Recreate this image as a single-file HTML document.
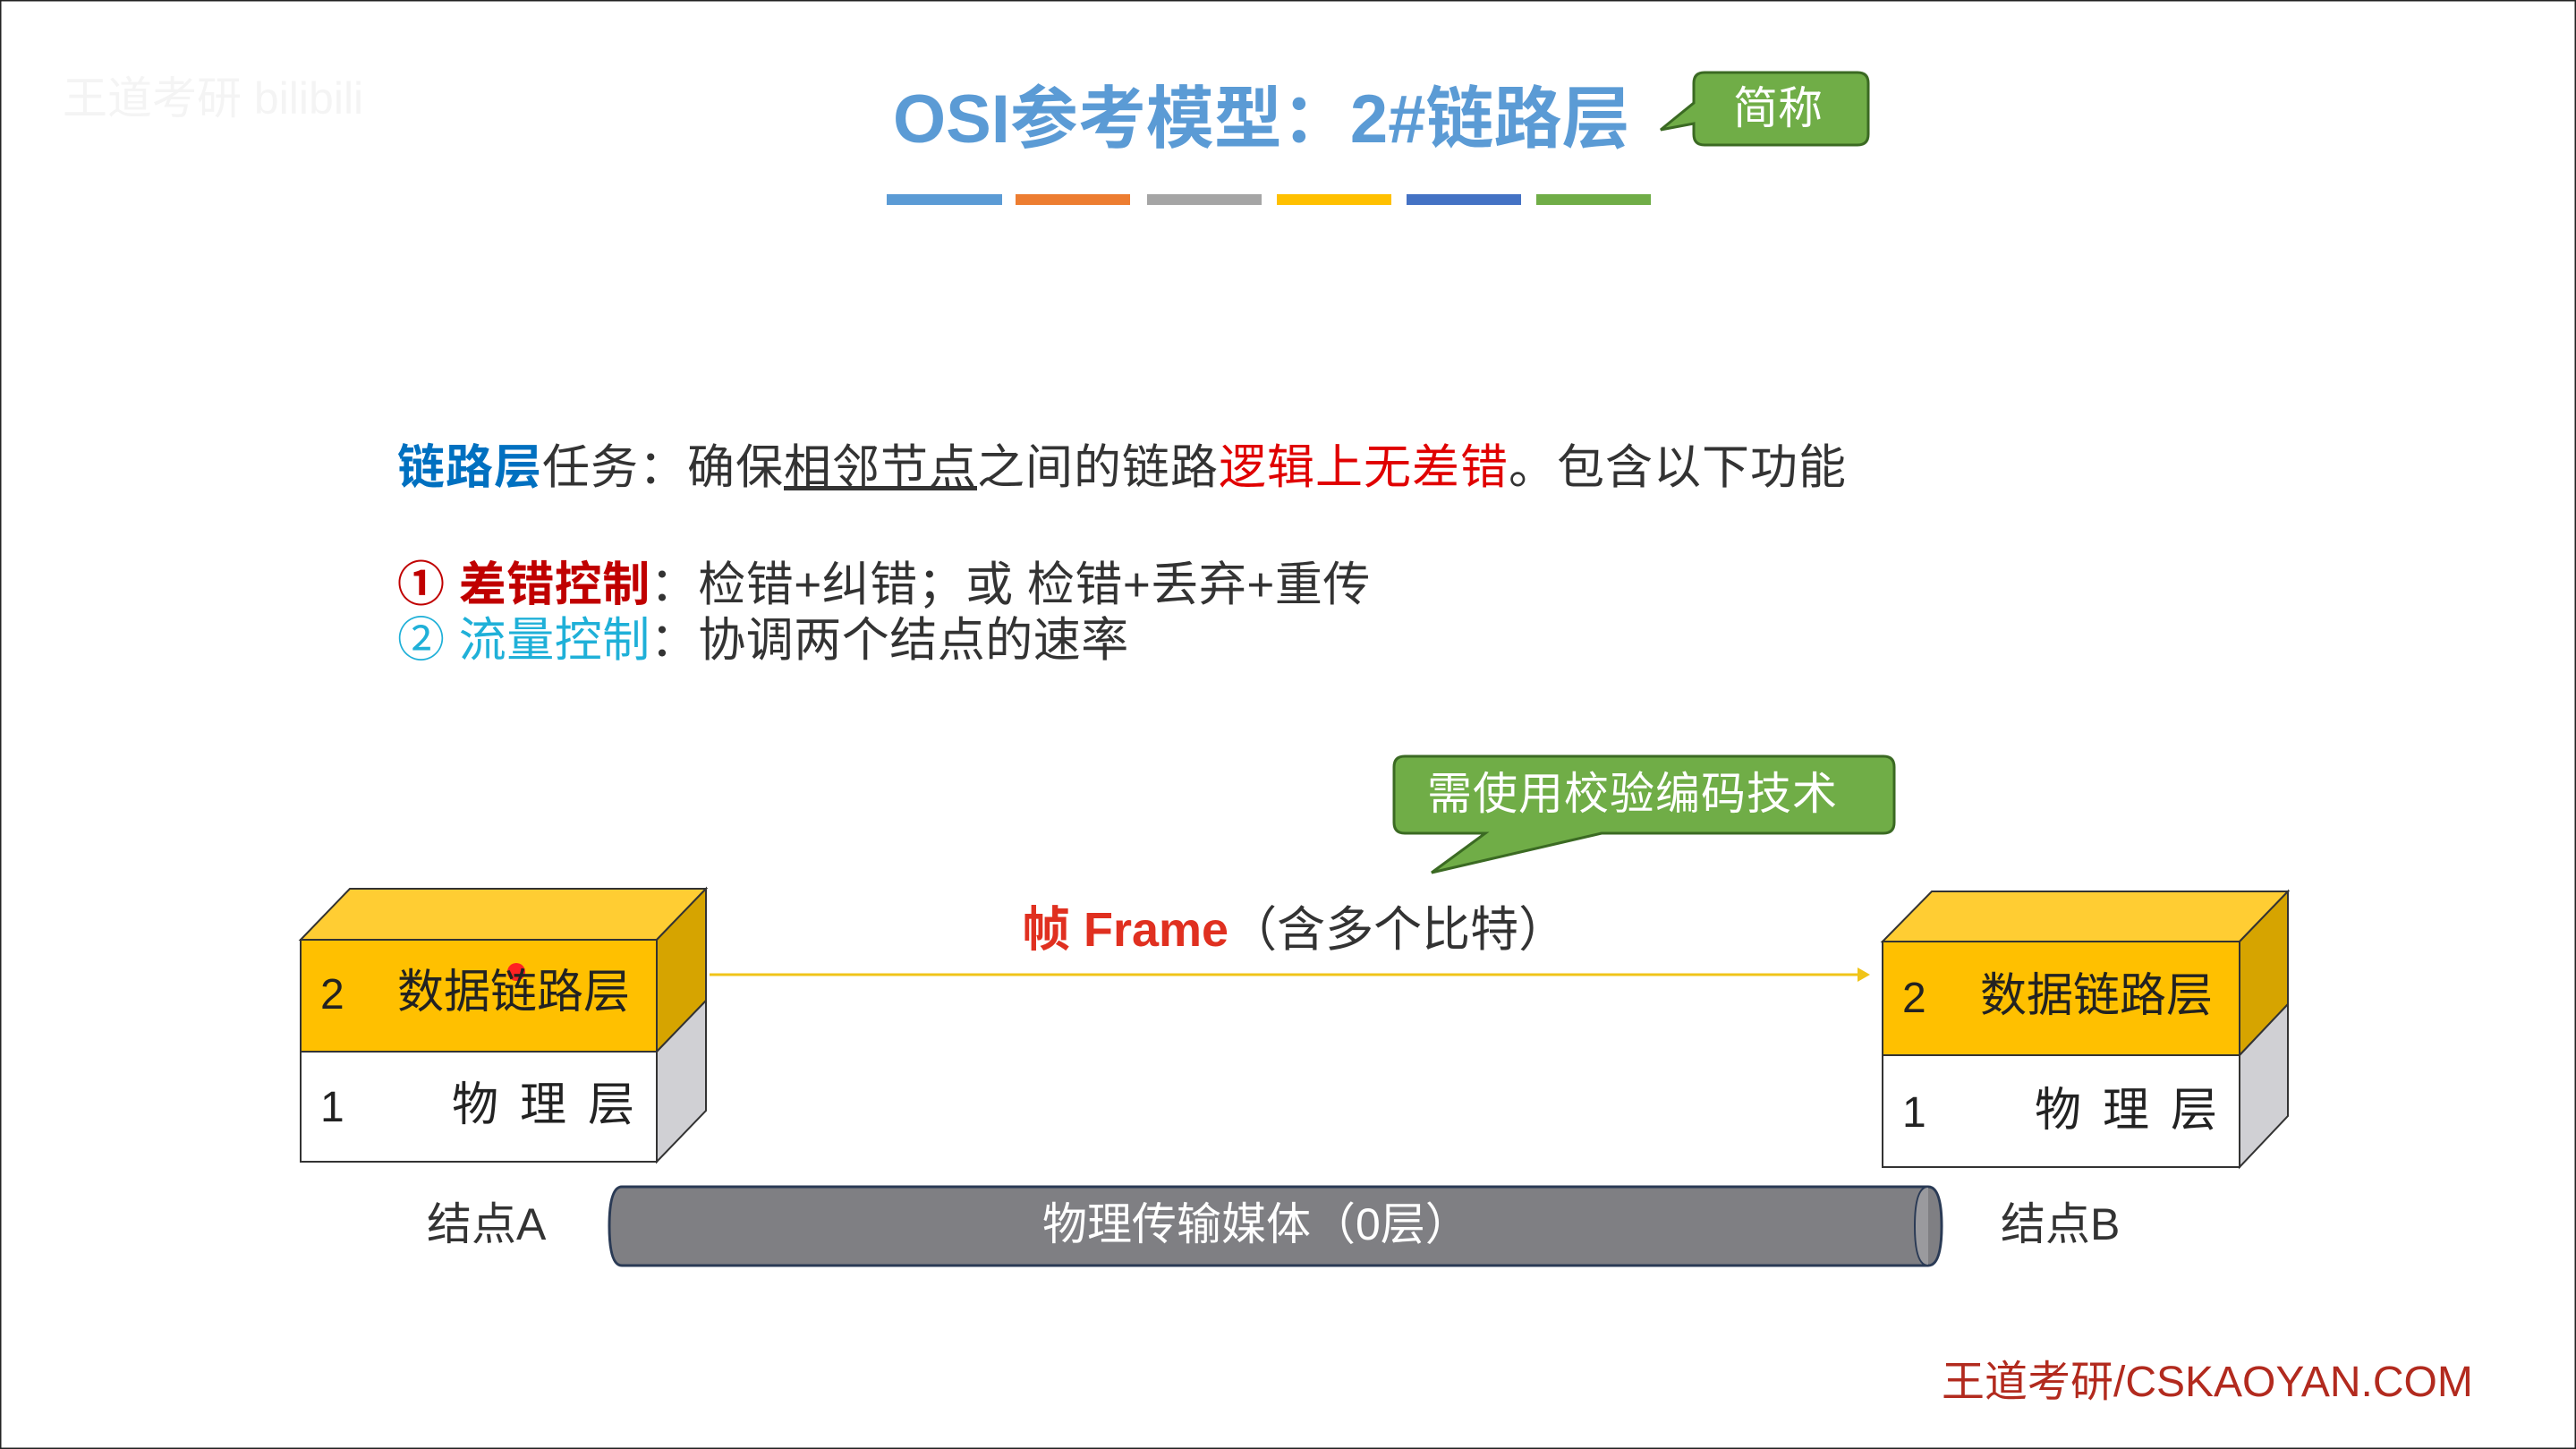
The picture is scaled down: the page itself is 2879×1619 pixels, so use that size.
<!DOCTYPE html>
<html><head><meta charset="utf-8"><style>
body{margin:0;width:2879px;height:1619px;overflow:hidden;background:#fff;position:relative;font-family:"Liberation Sans","Noto Sans CJK SC",sans-serif;}
.t{position:absolute;white-space:nowrap;line-height:1;}
svg{position:absolute;left:0;top:0;}
</style></head><body>
<svg width="2879" height="1619">
<rect x="0" y="0" width="2879" height="1619" fill="#fff" stroke="#222" stroke-width="3"/>
<g>
<rect x="991" y="217" width="129" height="12" fill="#5b9bd5"/>
<rect x="1135" y="217" width="128" height="12" fill="#ed7d31"/>
<rect x="1282" y="217" width="128" height="12" fill="#a5a5a5"/>
<rect x="1427" y="217" width="128" height="12" fill="#ffc000"/>
<rect x="1572" y="217" width="128" height="12" fill="#4472c4"/>
<rect x="1717" y="217" width="128" height="12" fill="#70ad47"/>
</g>
<path d="M1905 81 H2076 Q2088 81 2088 93 V150 Q2088 162 2076 162 H1905 Q1893 162 1893 150 V138 L1856 145 L1893 115 V93 Q1893 81 1905 81Z" fill="#70ad47" stroke="#3b6a23" stroke-width="3"/>
<path d="M1570 845 H2105 Q2117 845 2117 857 V919 Q2117 931 2105 931 H1790 L1600 975 L1660 931 H1570 Q1558 931 1558 919 V857 Q1558 845 1570 845Z" fill="#70ad47" stroke="#3b6a23" stroke-width="3"/>
<line x1="793" y1="1089" x2="2078" y2="1089" stroke="#f0c419" stroke-width="3"/>
<path d="M2076 1081 L2090 1089 L2076 1097Z" fill="#f0c419"/>
<path d="M336 1050 L391 993 H789 L734 1050Z" fill="#ffcd33" stroke="#333" stroke-width="2"/>
<path d="M734 1050 L789 993 V1118 L734 1175Z" fill="#d6a400" stroke="#333" stroke-width="2"/>
<path d="M734 1175 L789 1118 V1241 L734 1298Z" fill="#d0d0d4" stroke="#333" stroke-width="2"/>
<rect x="336" y="1050" width="398" height="125" fill="#ffc000" stroke="#333" stroke-width="2"/>
<rect x="336" y="1175" width="398" height="123" fill="#fff" stroke="#333" stroke-width="2"/>
<path d="M2104 1052 L2159 996 H2557 L2503 1052Z" fill="#ffcd33" stroke="#333" stroke-width="2"/>
<path d="M2503 1052 L2557 996 V1122 L2503 1179Z" fill="#d6a400" stroke="#333" stroke-width="2"/>
<path d="M2503 1179 L2557 1122 V1247 L2503 1304Z" fill="#d0d0d4" stroke="#333" stroke-width="2"/>
<rect x="2104" y="1052" width="399" height="127" fill="#ffc000" stroke="#333" stroke-width="2"/>
<rect x="2104" y="1179" width="399" height="125" fill="#fff" stroke="#333" stroke-width="2"/>
<path d="M695 1326 H2155 Q2170 1326 2170 1370 Q2170 1414 2155 1414 H695 Q681 1414 681 1370 Q681 1326 695 1326Z" fill="#7f7f83" stroke="#2a3a55" stroke-width="3"/>
<path d="M2155 1326 Q2140 1326 2140 1370 Q2140 1414 2155 1414" fill="#9a9a9e" stroke="#2a3a55" stroke-width="2"/>
<circle cx="577" cy="1086" r="10" fill="#f22"/>
</svg>
<div class="t" style="left:998px;top:96px;font-size:76px;font-weight:bold;color:#5b9bd5;">OSI参考模型：2#链路层</div>
<div class="t" style="left:1937px;top:96px;font-size:50px;color:#fff;">简称</div>
<div class="t" style="left:70px;top:85px;font-size:50px;color:#f4f4f4;">王道考研 bilibili</div>
<div class="t" style="left:444px;top:496px;font-size:53px;color:#333;letter-spacing:1px;"><b style="color:#0070c0">链路层</b>任务：确保<u>相邻节点</u>之间的链路<b style="color:#e00000;font-weight:normal">逻辑上无差错</b>。包含以下功能</div>
<div class="t" style="left:444px;top:627px;font-size:53px;color:#333;letter-spacing:0.5px;"><b style="color:#c00000">① 差错控制</b>：检错+纠错；或 检错+丢弃+重传</div>
<div class="t" style="left:444px;top:689px;font-size:53px;color:#333;letter-spacing:0.5px;"><span style="color:#1fb0d8">② 流量控制</span>：协调两个结点的速率</div>
<div class="t" style="left:1595px;top:862px;font-size:50px;color:#fff;letter-spacing:1px;">需使用校验编码技术</div>
<div class="t" style="left:1142px;top:1012px;font-size:54px;color:#333;"><b style="color:#e03020">帧 Frame</b>（含多个比特）</div>
<div class="t" style="left:358px;top:1088px;font-size:48px;color:#222;">2</div>
<div class="t" style="left:444px;top:1083px;font-size:52px;color:#222;">数据链路层</div>
<div class="t" style="left:358px;top:1214px;font-size:48px;color:#222;">1</div>
<div class="t" style="left:505px;top:1209px;font-size:52px;color:#222;letter-spacing:24px;">物理层</div>
<div class="t" style="left:2126px;top:1092px;font-size:48px;color:#222;">2</div>
<div class="t" style="left:2213px;top:1087px;font-size:52px;color:#222;">数据链路层</div>
<div class="t" style="left:2126px;top:1220px;font-size:48px;color:#222;">1</div>
<div class="t" style="left:2274px;top:1215px;font-size:52px;color:#222;letter-spacing:24px;">物理层</div>
<div class="t" style="left:477px;top:1343px;font-size:50px;color:#333;">结点A</div>
<div class="t" style="left:2236px;top:1343px;font-size:50px;color:#333;">结点B</div>
<div class="t" style="left:1165px;top:1343px;font-size:50px;color:#fff;">物理传输媒体（0层）</div>
<div class="t" style="left:2170px;top:1521px;font-size:48px;color:#b22a1e;">王道考研/CSKAOYAN.COM</div>
</body></html>
